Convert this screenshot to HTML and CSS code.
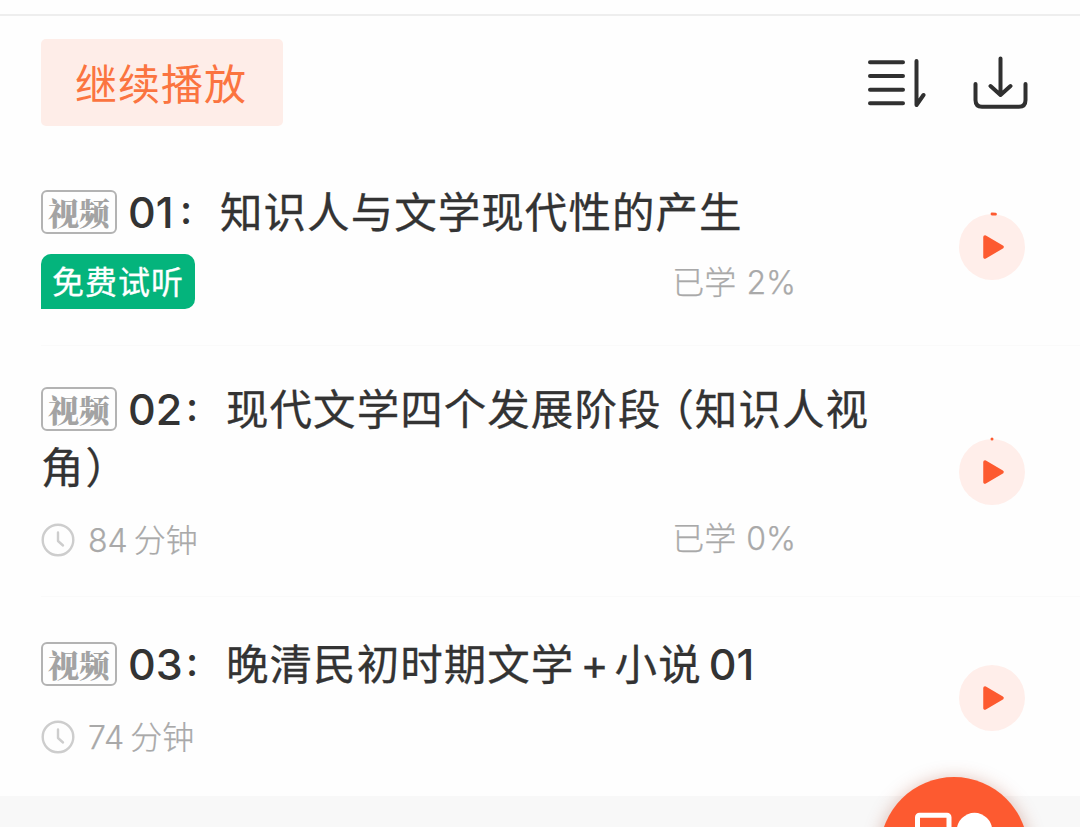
FILE: index.html
```html
<!DOCTYPE html>
<html lang="zh-CN">
<head>
<meta charset="utf-8">
<title>课程目录</title>
<link rel="stylesheet" href="styles.css">
</head>
<body>
<main class="page">
  <header class="toolbar">
    <button class="resume">继续播放</button>
    <div class="tools">
      <svg class="icon-sort" width="60" height="54" viewBox="0 0 60 54" fill="none" stroke="#303030" stroke-width="4" stroke-linecap="round" stroke-linejoin="round"><path d="M4 6.300H37M4 20H37M4 33.700H37M4 47.300H37M50.500 5V49L57.500 39"/></svg>
      <svg class="icon-download" width="56" height="56" viewBox="0 0 56 56" fill="none" stroke="#303030" stroke-width="4" stroke-linecap="round" stroke-linejoin="round"><path d="M3.500 28V44Q3.500 50.700 10 50.700H47Q53.500 50.700 53.500 44V28M28.500 2.500V39M18.500 30L28.500 39L38.500 30"/></svg>
    </div>
  </header>

  <section class="lesson first">
    <div class="body">
      <h2 class="title"><span class="badge"><span class="badge-text">视频</span></span><span class="num one">01</span><span class="colon">:</span><span class="name">知识人与文学现代性的产生</span></h2>
      <div class="meta meta-trial"><span class="trial">免费试听</span><span class="learned">已学<span class="latin percent">2%</span></span></div>
    </div>
    <svg class="play" width="68" height="74" viewBox="0 0 68 74"><circle cx="34" cy="37" r="33" fill="#ffeeea"/><path d="M34 4A33 33 0 0 1 37.500 4.200" fill="none" stroke="#fd5a30" stroke-width="2.800" stroke-linecap="round"/><path d="M27 27L44 37L27 47Z" fill="#fd5a30" stroke="#fd5a30" stroke-width="3.500" stroke-linejoin="round"/></svg>
  </section>

  <section class="lesson second">
    <div class="body">
      <h2 class="title two-lines"><span class="badge"><span class="badge-text">视频</span></span><span class="num">02</span><span class="colon">:</span><span class="name">现代文学四个发展阶段<span class="half open">（</span>知识人视<br>角<span class="half close">）</span></span></h2>
      <div class="meta"><svg class="clock" width="34" height="34" viewBox="0 0 34 34" fill="none" stroke="#cdcdcd" stroke-width="2.400" stroke-linecap="round" stroke-linejoin="round"><circle cx="17" cy="17" r="15.300"/><path d="M17 9.500V18L22 22.500"/></svg><span class="duration"><span class="latin mins">84</span>分钟</span><span class="learned">已学<span class="latin percent">0%</span></span></div>
    </div>
    <svg class="play" width="68" height="74" viewBox="0 0 68 74"><circle cx="34" cy="37" r="33" fill="#ffeeea"/><circle cx="34" cy="4" r="1.500" fill="#fd5a30"/><path d="M27 27L44 37L27 47Z" fill="#fd5a30" stroke="#fd5a30" stroke-width="3.500" stroke-linejoin="round"/></svg>
  </section>

  <section class="lesson third">
    <div class="body">
      <h2 class="title"><span class="badge"><span class="badge-text">视频</span></span><span class="num">03</span><span class="colon">:</span><span class="name">晚清民初时期文学<span class="plus">+</span>小说<span class="tail">01</span></span></h2>
      <div class="meta"><svg class="clock" width="34" height="34" viewBox="0 0 34 34" fill="none" stroke="#cdcdcd" stroke-width="2.400" stroke-linecap="round" stroke-linejoin="round"><circle cx="17" cy="17" r="15.300"/><path d="M17 9.500V18L22 22.500"/></svg><span class="duration"><span class="latin mins">74</span>分钟</span></div>
    </div>
    <svg class="play" width="68" height="74" viewBox="0 0 68 74"><circle cx="34" cy="37" r="33" fill="#ffeeea"/><path d="M27 27L44 37L27 47Z" fill="#fd5a30" stroke="#fd5a30" stroke-width="3.500" stroke-linejoin="round"/></svg>
  </section>
  <div class="footer"></div>
  <button class="fab" aria-label="更多">
    <svg width="90" height="90" viewBox="0 0 90 90"><rect x="8.500" y="10.300" width="31.500" height="31.500" rx="2" fill="none" stroke="#fff" stroke-width="5"/><circle cx="65.500" cy="25.500" r="17.700" fill="#fff"/></svg>
  </button>
</main>
</body>
</html>
```
FILE: styles.css
```css
* { box-sizing: border-box; }
body { margin: 0; background: #fefefe; }
.page {
  position: relative;
  width: 1080px;
  height: 827px;
  overflow: hidden;
  padding-top: 14px;
  font-family: Inter, "Noto Sans CJK SC", sans-serif;
  color: #333;
}
.toolbar {
  display: flex;
  justify-content: space-between;
  align-items: flex-start;
  height: 132px;
  padding: 23px 52px 0 41px;
  border-top: 2px solid #eeeeee;
}
.resume {
  width: 242px;
  height: 87px;
  padding: 0 2px 2px 0;
  border: 0;
  border-radius: 5px;
  background: #feede8;
  color: #fb7440;
  font: 42px/60px "Noto Sans CJK SC", sans-serif;
  letter-spacing: 1px;
}
.tools { display: flex; gap: 46px; padding-top: 17px; }
.lesson {
  display: flex;
  align-items: center;
  justify-content: space-between;
  margin-left: 41px;
  padding-right: 54px;
  border-bottom: 1px solid #fafafa;
}
.first { height: 200px; }
.second { height: 251px; }
.third { height: 199px; border-bottom: 0; }
.body { align-self: flex-start; width: 850px; }
.first .body { padding-top: 37px; }
.second .body { padding-top: 34px; }
.third .body { padding-top: 38px; }
.play { flex: none; margin-top: 2px; }
.third .play { margin-top: 3px; }
.title {
  height: 58px;
  margin: 0;
  font-size: 42.5px;
  font-weight: 400;
  line-height: 58px;
  white-space: nowrap;
}
.two-lines { height: 116px; }
.badge {
  display: inline-flex;
  align-items: center;
  justify-content: center;
  width: 76px;
  height: 44px;
  margin-right: 11px;
  border: 2px solid #b3b3b3;
  border-radius: 6px;
  vertical-align: 3px;
}
.badge-text {
  font: 900 31px/40px "Noto Serif CJK SC", "Noto Serif SC", "Noto Sans CJK SC", serif;
  color: #a3a3a3;
}
.num, .tail { font-weight: 500; font-size: 43px; }
.num { display: inline-block; width: 54px; }
.num.one { width: 48px; }
.colon {
  display: inline-block;
  width: 44px;
  padding-left: 4px;
  font-size: 40px;
  font-weight: 500;
  line-height: 40px;
  vertical-align: 4px;
}
.name {
  letter-spacing: 1.05px;
  -webkit-text-stroke: 0.3px #333;
  font-family: "Noto Sans CJK SC", sans-serif;
  line-height: 50px;
}
.half { font-feature-settings: "halt"; }
.open { margin-left: 11px; }
.close { margin-left: 1px; }
.plus { margin: 0 5px 0 6px; font-family: Inter, sans-serif; }
.tail { font-family: Inter, sans-serif; letter-spacing: 0; -webkit-text-stroke: 0; margin-left: 7px; }
.meta {
  display: flex;
  align-items: center;
  height: 40px;
  margin-top: 24px;
  color: #a9a9a9;
  font-size: 32px;
  font-family: "Noto Sans CJK SC", sans-serif;
  font-weight: 300;
  -webkit-text-stroke: 0.25px #a9a9a9;
}
.meta-trial { height: 55px; margin-top: 13px; }
.trial {
  width: 154px;
  height: 55px;
  border-radius: 10px 10px 10px 0;
  background: #04b47c;
  color: #fff;
  font-size: 32px;
  font-weight: 400;
  line-height: 53px;
  letter-spacing: 1px;
  text-align: center;
  -webkit-text-stroke: 0.3px #fff;
}
.duration, .learned { padding-bottom: 4px; }
.learned { margin-left: auto; margin-right: 95px; }
.second .learned { padding-bottom: 9px; }
.latin { font-family: Inter, sans-serif; }
.percent { margin-left: 10px; }
.clock { margin-right: 13px; }
.mins { margin-right: 6px; }
.footer { height: 31px; background: #f8f8f8; }
.fab {
  position: absolute;
  left: 880px;
  top: 777px;
  display: flex;
  align-items: flex-start;
  width: 148px;
  height: 148px;
  padding: 28px 0 0 29px;
  border: 0;
  border-radius: 50%;
  background: #fd5a30;
  box-shadow: 0 2px 18px rgba(160, 55, 25, 0.35);
}
.fab svg { flex: none; }
```
